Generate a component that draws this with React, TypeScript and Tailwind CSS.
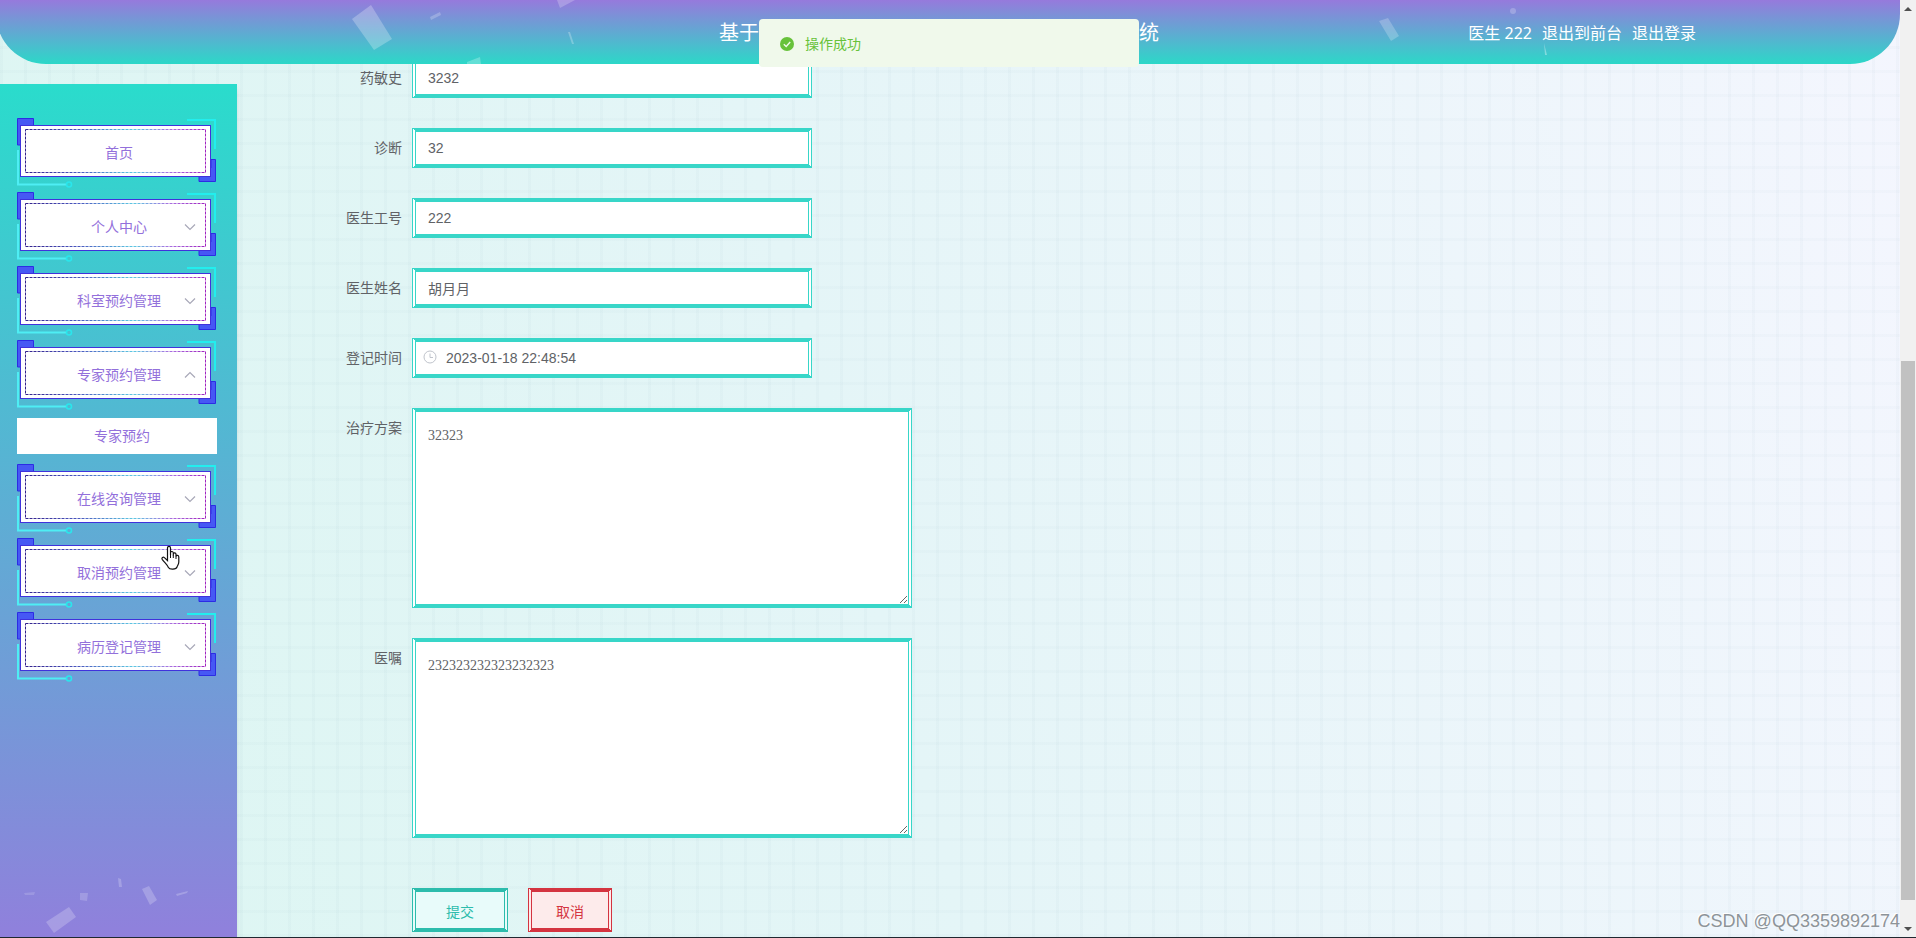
import React from "react";

const arrows = {
  down: "M1 1.5 L6 6.5 L11 1.5",
  up: "M1 6.5 L6 1.5 L11 6.5",
};

function MenuFrame() {
  return (
    <svg className="absolute inset-0" width="200" height="74" viewBox="0 0 200 74" fill="none" aria-hidden="true">
      <defs>
        <linearGradient id="dash" x1="0" x2="1" y1="0" y2="0">
          <stop offset="0" stopColor="#33208c" />
          <stop offset="0.3" stopColor="#4a58c0" />
          <stop offset="0.6" stopColor="#5cc8e2" />
          <stop offset="0.8" stopColor="#a86fe0" />
          <stop offset="1" stopColor="#a024c0" />
        </linearGradient>
      </defs>
      <path d="M0.5 0.5 H16.5 V20 H4 V27 H0.5 Z" fill="#4658f4" stroke="#2c2ce4" />
      <path d="M198.5 41.5 V63.5 H182 V50 H194 V41.5 Z" fill="#4658f4" stroke="#2c2ce4" />
      <path d="M170 2 H198 V31" stroke="#22eeee" strokeWidth="2" />
      <path d="M1 32 V66.5 H49" stroke="#4eeef4" strokeWidth="2" />
      <circle cx="52" cy="66.5" r="2.5" stroke="#2ae6ec" strokeWidth="1.5" />
      <rect x="3.5" y="7.5" width="190" height="51" fill="#fff" stroke="#4032dc" />
      <rect x="8.5" y="11.5" width="180" height="43" stroke="url(#dash)" strokeDasharray="3 1" />
    </svg>
  );
}

function MenuItem({ label, arrow }: { label: string; arrow?: "up" | "down" }) {
  return (
    <li className="relative h-[74px]">
      <MenuFrame />
      <button type="button" className="relative flex h-[70px] w-full items-center justify-center pl-1 text-sm text-[#9370db]">
        {label}
        {arrow && (
          <svg className="absolute top-[31px] right-[21px]" width="12" height="8" viewBox="0 0 12 8" fill="none" stroke="#a8a8b8" strokeWidth="1.2" aria-hidden="true">
            <path d={arrows[arrow]} />
          </svg>
        )}
      </button>
    </li>
  );
}

function Row({ id, label, children }: { id: string; label: string; children: React.ReactNode }) {
  return (
    <div className="flex items-start gap-2.5">
      <label htmlFor={id} className="w-20 text-right text-sm leading-10 text-[#606266]">
        {label}
      </label>
      {children}
    </div>
  );
}

const box = "border-4 border-[#38d6c8] bg-white text-sm text-[#606266] outline-none [border-style:solid_double]";

function TextField({ id, label, value }: { id: string; label: string; value: string }) {
  return (
    <Row id={id} label={label}>
      <input id={id} defaultValue={value} className={`h-10 w-100 px-3 ${box}`} />
    </Row>
  );
}

function Area({ id, label, value }: { id: string; label: string; value: string }) {
  return (
    <Row id={id} label={label}>
      <textarea
        id={id}
        defaultValue={value}
        className={`h-50 w-125 resize px-3 py-3.5 font-['Liberation_Serif','Noto_Sans_CJK_SC',serif] ${box}`}
      />
    </Row>
  );
}

function HeaderConfetti() {
  return (
    <svg className="absolute inset-y-0 left-1 h-full w-full" fill="#fff" aria-hidden="true">
      <path d="M352 19 L371 5 L392 39 L374 50 Z" opacity="0.25" />
      <path d="M430 17 L440 12 L441 15 L431 20 Z" opacity="0.22" />
      <path d="M557 0 H575 L560 8 Z" opacity="0.22" />
      <path d="M568 32 L570 32 L574 44 L572 44 Z" opacity="0.25" />
      <path d="M467 62 L480 57 L481 64 L467 64 Z" opacity="0.25" />
      <path d="M1379 21 L1388 18 L1399 36 L1391 41 Z" opacity="0.22" />
      <circle cx="1513" cy="11" r="3" opacity="0.22" />
      <path d="M1544 43 L1547 55 L1545 55 Z" opacity="0.35" />
    </svg>
  );
}

function SideConfetti() {
  return (
    <svg className="mt-auto block w-full" height="90" viewBox="0 0 237 90" fill="#fff" aria-hidden="true">
      <path d="M46 75 L69 60 L76 70 L54 86 Z" opacity="0.22" />
      <path d="M142 42 L149 39 L157 53 L150 58 Z" opacity="0.22" />
      <path d="M80 46 L88 46 L87 54 L80 53 Z" opacity="0.18" />
      <path d="M118 31 L121 32 L122 40 L119 40 Z" opacity="0.22" />
      <path d="M24 46 L35 45 L34 48 L25 48 Z" opacity="0.15" />
      <path d="M176 47 L188 44 L187 46 L177 49 Z" opacity="0.22" />
    </svg>
  );
}

export default function App() {
  return (
    <div className="flex h-screen overflow-hidden border-b border-[#202830] font-['Liberation_Sans','Noto_Sans_CJK_SC',sans-serif]">
      <div className="relative flex min-w-0 flex-1 flex-col bg-[repeating-linear-gradient(90deg,rgba(110,150,170,0.04)_0_3px,transparent_3px_24px),repeating-linear-gradient(0deg,rgba(110,150,170,0.03)_0_3px,transparent_3px_24px),linear-gradient(75deg,#dcf6f2_0%,#e4f5f7_45%,#f4f6fe_100%)]">
        <header className="relative z-10 -ml-1 flex h-16 shrink-0 items-center overflow-hidden rounded-b-[50px] bg-linear-to-b/srgb from-[#967adc] to-[#2cd8c8] pt-0.5 text-white">
          <HeaderConfetti />
          <h1 className="relative ml-[723px] flex w-[440px] justify-between text-xl">
            <span>基于</span>
            <span>统</span>
          </h1>
          <nav className="relative mr-[204px] ml-auto flex gap-2.5 font-['Noto_Sans','Noto_Sans_CJK_SC',sans-serif] whitespace-nowrap">
            <span>医生 222</span>
            <a href="#front">退出到前台</a>
            <a href="#logout">退出登录</a>
          </nav>
        </header>

        <div className="flex min-h-0 flex-1">
          <aside className="mt-5 flex w-[237px] shrink-0 flex-col bg-linear-to-b/srgb from-[#2adccc] to-[#9080dc] pt-[34px] shadow-md">
            <ul className="ml-[17px] w-50">
              <MenuItem label="首页" />
              <MenuItem label="个人中心" arrow="down" />
              <MenuItem label="科室预约管理" arrow="down" />
              <MenuItem label="专家预约管理" arrow="up" />
              <li className="pt-1 pb-2.5">
                <a href="#expert" className="flex h-9 items-center justify-center bg-white pl-2.5 text-sm text-[#9370db]">
                  专家预约
                </a>
              </li>
              <MenuItem label="在线咨询管理" arrow="down" />
              <MenuItem label="取消预约管理" arrow="down" />
              <MenuItem label="病历登记管理" arrow="down" />
            </ul>
            <SideConfetti />
          </aside>

          <form className="-mt-1.5 flex flex-col gap-7.5 pl-[85px]">
            <TextField id="allergy" label="药敏史" value="3232" />
            <TextField id="diagnosis" label="诊断" value="32" />
            <TextField id="doctorNo" label="医生工号" value="222" />
            <TextField id="doctorName" label="医生姓名" value="胡月月" />
            <Row id="time" label="登记时间">
              <span className="relative">
                <input id="time" defaultValue="2023-01-18 22:48:54" className={`h-10 w-100 pr-3 pl-[30px] ${box}`} />
                <svg className="absolute top-3 left-[11px]" width="14" height="14" viewBox="0 0 14 14" fill="none" stroke="#c0c4cc" aria-hidden="true">
                  <circle cx="7" cy="7" r="6" />
                  <path d="M7 3.5 V7.5 H10" />
                </svg>
              </span>
            </Row>
            <Area id="plan" label="治疗方案" value="32323" />
            <Area id="advice" label="医嘱" value="232323232323232323" />
            <div className="mt-5 ml-[90px] flex gap-5 text-sm">
              <button type="button" className="h-11 w-24 border-4 border-[#2cbcac] bg-[#e8fbfa] pt-1 text-[#2cbcac] [border-style:solid_double]">
                提交
              </button>
              <button type="button" className="h-11 w-21 border-4 border-[#d43440] bg-[#fdebeb] pt-1 text-[#d43440] [border-style:solid_double]">
                取消
              </button>
            </div>
          </form>
        </div>

        <div role="status" className="absolute top-[19px] left-[759px] z-20 flex h-12 w-95 items-center gap-2.5 rounded bg-[#f0f9eb] px-5 pt-0.5 text-sm text-[#67c23a]">
          <svg width="16" height="16" viewBox="0 0 16 16" aria-hidden="true">
            <circle cx="8" cy="8" r="7" fill="#67c23a" />
            <path d="M4.8 8.2 L7.2 10.5 L11.2 6" fill="none" stroke="#f0f9eb" strokeWidth="1.4" />
          </svg>
          操作成功
        </div>

        <p className="absolute right-0 bottom-0.5 text-lg text-[#8d9499] [text-shadow:-1px_-1px_0_#fff]">CSDN @QQ3359892174</p>

        <svg className="absolute top-[545px] left-[161px] z-20" width="22" height="26" viewBox="0 0 22 26" aria-hidden="true">
          <path
            d="M6.5 15.5 V3 C6.5 0.7 9.5 0.7 9.5 3 V10 V7.5 C10 6 12.3 6.2 12.3 8 V10.5 V8.6 C13 7.3 15 7.6 15 9.3 V11.2 C15.5 9.8 17.8 10 17.8 12 V17 C17.8 19 16.5 20.5 16 22 C15.3 24.6 8.6 24.8 7.4 22.4 C6 19.5 3.5 17.5 1.2 14.3 C0.3 12.6 2.2 11.6 3.4 12.6 Z"
            fill="#fff"
            stroke="#111"
            strokeWidth="1.2"
          />
          <path d="M9.5 9 V13 M12.3 10 V13 M15 11 V14" stroke="#111" />
        </svg>
      </div>

      <div className="flex w-4 shrink-0 flex-col items-center bg-[#f1f1f1]" aria-hidden="true">
        <svg width="16" height="16" viewBox="0 0 16 16" fill="#505050">
          <path d="M4 11 L8 7 L12 11 Z" />
        </svg>
        <div className="grow-[345]" />
        <div className="w-3.5 grow-[539] bg-[#c1c1c1]" />
        <div className="grow-[21]" />
        <svg width="16" height="16" viewBox="0 0 16 16" fill="#505050">
          <path d="M4 6 L8 10 L12 6 Z" />
        </svg>
      </div>
    </div>
  );
}
